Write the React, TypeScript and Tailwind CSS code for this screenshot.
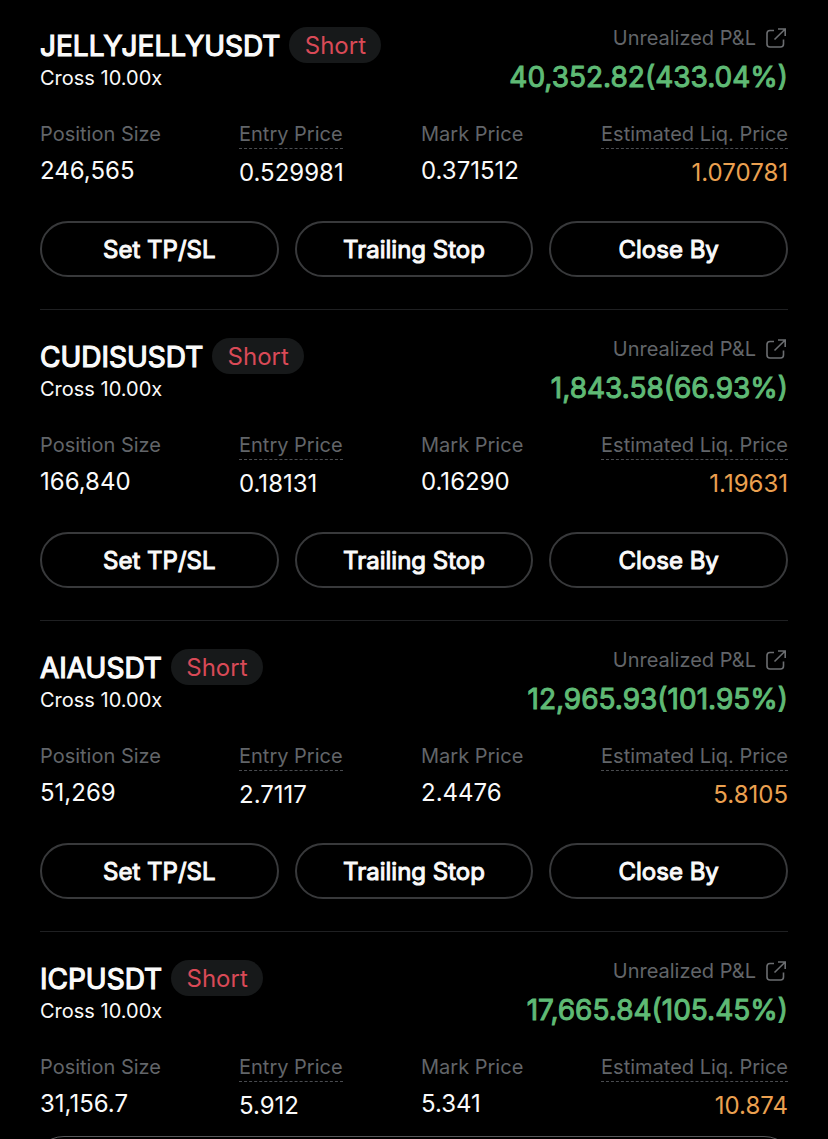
type Position = {
  symbol: string;
  pnl: string;
  size: string;
  entry: string;
  mark: string;
  liq: string;
};

const positions: Position[] = [
  { symbol: "JELLYJELLYUSDT", pnl: "40,352.82(433.04%)", size: "246,565", entry: "0.529981", mark: "0.371512", liq: "1.070781" },
  { symbol: "CUDISUSDT", pnl: "1,843.58(66.93%)", size: "166,840", entry: "0.18131", mark: "0.16290", liq: "1.19631" },
  { symbol: "AIAUSDT", pnl: "12,965.93(101.95%)", size: "51,269", entry: "2.7117", mark: "2.4476", liq: "5.8105" },
  { symbol: "ICPUSDT", pnl: "17,665.84(105.45%)", size: "31,156.7", entry: "5.912", mark: "5.341", liq: "10.874" },
];

const actions = ["Set TP/SL", "Trailing Stop", "Close By"];

function ShareIcon() {
  return (
    <svg width="22" height="22" viewBox="0 0 22 22" fill="none" stroke="#6b6d70" strokeWidth="1.6">
      <path d="M9 3.5H5Q2 3.5 2 6.5V17Q2 20 5 20H15.5Q18.5 20 18.5 17V12.5" />
      <path d="M13 2H20.2V9M20.2 2L9.5 12.5" />
    </svg>
  );
}

function Field({ label, value, dashed = false, liq = false }: { label: string; value: string; dashed?: boolean; liq?: boolean }) {
  return (
    <div className={liq ? "flex flex-col items-end" : "flex flex-col items-start"}>
      <div
        className={
          dashed
            ? "h-7 border-b border-dashed border-[#4a4c50] text-[20px] leading-[26px] whitespace-nowrap text-[#626569]"
            : "h-[26px] text-[20px] leading-[26px] whitespace-nowrap text-[#626569]"
        }
      >
        {label}
      </div>
      <div className={liq ? "mt-2 text-[24px] leading-8 text-[#eba050]" : "mt-2 text-[24px] leading-8"}>{value}</div>
    </div>
  );
}

function PositionCard({ p, showActions }: { p: Position; showActions: boolean }) {
  return (
    <section className="h-[311px] shrink-0">
      <div className="flex h-[101px] justify-between pt-[27px]">
        <div>
          <div className="flex h-9 items-center gap-[9px]">
            <h2 className="pt-[2px] text-[28px] leading-9 [-webkit-text-stroke:1.2px]">{p.symbol}</h2>
            <span className="flex h-9 w-[92px] items-center justify-center rounded-full bg-[#17191a] pt-px text-[24px] text-[#d94a57]">
              Short
            </span>
          </div>
          <div className="mt-[2px] text-[20px] leading-[26px]">Cross 10.00x</div>
        </div>
        <div className="-mt-px flex flex-col items-end">
          <div className="flex h-6 items-center gap-[9px] pr-px text-[20px] text-[#626569]">
            Unrealized P&amp;L
            <ShareIcon />
          </div>
          <div className="mt-[9px] text-[28px] leading-9 text-[#5fba75] [-webkit-text-stroke:1px]">{p.pnl}</div>
        </div>
      </div>
      <div className="grid h-[94px] grid-cols-[199px_182px_180px_187px] pt-5">
        <Field label="Position Size" value={p.size} />
        <Field label="Entry Price" value={p.entry} dashed />
        <Field label="Mark Price" value={p.mark} />
        <Field label="Estimated Liq. Price" value={p.liq} dashed liq />
      </div>
      {showActions && (
        <>
          <div className="mt-[26px] grid grid-cols-3 gap-4">
            {actions.map((a) => (
              <button key={a} className="h-14 rounded-full border-2 border-[#38393b] pt-[2px] text-[24px] [-webkit-text-stroke:1px]">
                {a}
              </button>
            ))}
          </div>
          <div className="mt-8 h-px bg-[#1f2022]" />
        </>
      )}
    </section>
  );
}

export default function App() {
  return (
    <main className="relative flex h-[1139px] w-[828px] flex-col overflow-hidden bg-black px-10 font-['Inter',sans-serif] text-[#fafafa]">
      {positions.map((p, i) => (
        <PositionCard key={p.symbol} p={p} showActions={i < positions.length - 1} />
      ))}
      {/* Top edge of the floating bottom bar */}
      <div className="absolute inset-x-8 top-[1136px] h-24 rounded-[32px] border border-[#58595b] bg-black" />
    </main>
  );
}
